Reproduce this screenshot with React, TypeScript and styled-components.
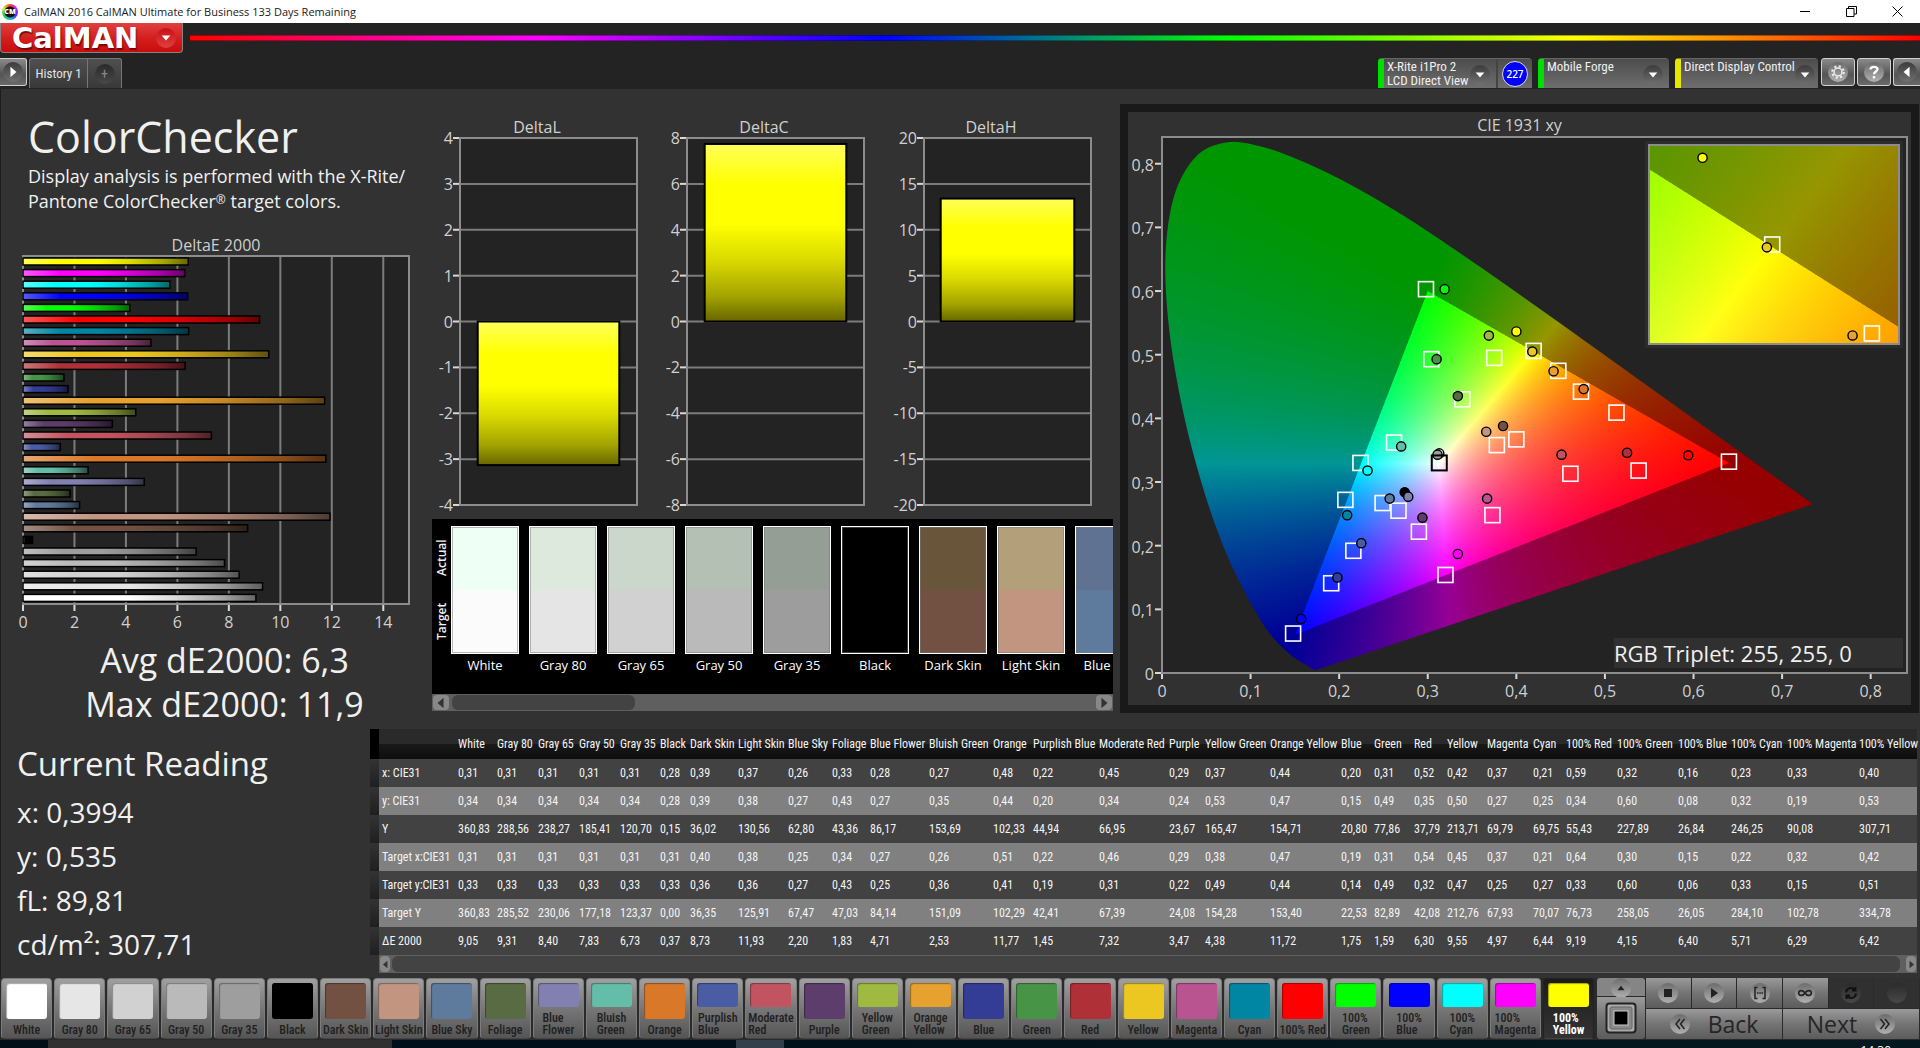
import React, { useEffect, useRef } from 'react';
import styled, { createGlobalStyle, css } from 'styled-components';

/* ---------- data ---------- */

type Patch = { name: string; color: string; values: string[]; col: number };

const patch = (name: string, color: string, col: number, values: string): Patch => ({
  name,
  color,
  col,
  values: values.split(' '),
});

const PATCHES: Patch[] = [
  patch('White', '#ffffff', 39, '0,31 0,34 360,83 0,31 0,33 360,83 9,05'),
  patch('Gray 80', '#e6e6e6', 41, '0,31 0,34 288,56 0,31 0,33 285,52 9,31'),
  patch('Gray 65', '#d1d1d1', 41, '0,31 0,34 238,27 0,31 0,33 230,06 8,40'),
  patch('Gray 50', '#bababa', 41, '0,31 0,34 185,41 0,31 0,33 177,18 7,83'),
  patch('Gray 35', '#9e9e9e', 40, '0,31 0,34 120,70 0,31 0,33 123,37 6,73'),
  patch('Black', '#000000', 30, '0,28 0,28 0,15 0,31 0,33 0,00 0,37'),
  patch('Dark Skin', '#735142', 48, '0,39 0,39 36,02 0,40 0,36 36,35 8,73'),
  patch('Light Skin', '#c29581', 50, '0,37 0,38 130,56 0,38 0,36 125,91 11,93'),
  patch('Blue Sky', '#5e7a9c', 44, '0,26 0,27 62,80 0,25 0,27 67,47 2,20'),
  patch('Foliage', '#596b42', 38, '0,33 0,43 43,36 0,34 0,43 47,03 1,83'),
  patch('Blue Flower', '#8280b0', 59, '0,28 0,27 86,17 0,27 0,25 84,14 4,71'),
  patch('Bluish Green', '#63bda8', 64, '0,27 0,35 153,69 0,26 0,36 151,09 2,53'),
  patch('Orange', '#d97829', 40, '0,48 0,44 102,33 0,51 0,41 102,29 11,77'),
  patch('Purplish Blue', '#4a5ca3', 66, '0,22 0,20 44,94 0,22 0,19 42,41 1,45'),
  patch('Moderate Red', '#c25461', 70, '0,45 0,34 66,95 0,46 0,31 67,39 7,32'),
  patch('Purple', '#5c3d6b', 36, '0,29 0,24 23,67 0,29 0,22 24,08 3,47'),
  patch('Yellow Green', '#9eba40', 65, '0,37 0,53 165,47 0,38 0,49 154,28 4,38'),
  patch('Orange Yellow', '#e6a12e', 71, '0,44 0,47 154,71 0,47 0,44 153,40 11,72'),
  patch('Blue', '#333d96', 33, '0,20 0,15 20,80 0,19 0,14 22,53 1,75'),
  patch('Green', '#479447', 40, '0,31 0,49 77,86 0,31 0,49 82,89 1,59'),
  patch('Red', '#b03038', 33, '0,52 0,35 37,79 0,54 0,32 42,08 6,30'),
  patch('Yellow', '#edc721', 40, '0,42 0,50 213,71 0,45 0,47 212,76 9,55'),
  patch('Magenta', '#ba5491', 46, '0,37 0,27 69,79 0,37 0,25 67,93 4,97'),
  patch('Cyan', '#0085a3', 33, '0,21 0,25 69,75 0,21 0,27 70,07 6,44'),
  patch('100% Red', '#ff0000', 51, '0,59 0,34 55,43 0,64 0,33 76,73 9,19'),
  patch('100% Green', '#00ff00', 61, '0,32 0,60 227,89 0,30 0,60 258,05 4,15'),
  patch('100% Blue', '#0000ff', 53, '0,16 0,08 26,84 0,15 0,06 26,05 6,40'),
  patch('100% Cyan', '#00ffff', 56, '0,23 0,32 246,25 0,22 0,33 284,10 5,71'),
  patch('100% Magenta', '#ff00ff', 72, '0,33 0,19 90,08 0,32 0,15 102,78 6,29'),
  patch('100% Yellow', '#ffff00', 61, '0,40 0,53 307,71 0,42 0,51 334,78 6,42'),
];

const ROW_LABELS = ['x: CIE31', 'y: CIE31', 'Y', 'Target x:CIE31', 'Target y:CIE31', 'Target Y', 'ΔE 2000'];

const STACKED = ['Blue Flower', 'Bluish Green', 'Purplish Blue', 'Moderate Red', 'Yellow Green', 'Orange Yellow',
  '100% Green', '100% Blue', '100% Cyan', '100% Magenta', '100% Yellow'];

const COMPARED = [
  { name: 'White', actual: '#eefff5', target: '#fbfbfb' },
  { name: 'Gray 80', actual: '#dde9dc', target: '#e5e5e5' },
  { name: 'Gray 65', actual: '#ccd7cb', target: '#d1d1d1' },
  { name: 'Gray 50', actual: '#b5c0b4', target: '#bababa' },
  { name: 'Gray 35', actual: '#949e94', target: '#9d9d9d' },
  { name: 'Black', actual: '#000000', target: '#000000' },
  { name: 'Dark Skin', actual: '#69563a', target: '#735142' },
  { name: 'Light Skin', actual: '#b39f7a', target: '#c29581' },
  { name: 'Blue Sky', actual: '#607292', target: '#5e7a9c' },
];

type Point = [number, number];

const TARGETS: Point[] = [
  [0.298, 0.603], [0.304, 0.493], [0.375, 0.495], [0.339, 0.43], [0.262, 0.362], [0.224, 0.33],
  [0.378, 0.358], [0.4, 0.367], [0.207, 0.272], [0.249, 0.267], [0.267, 0.255], [0.29, 0.222],
  [0.373, 0.248], [0.216, 0.192], [0.191, 0.141], [0.32, 0.154], [0.148, 0.062], [0.4195, 0.506],
  [0.4474, 0.4747], [0.473, 0.442], [0.513, 0.409], [0.461, 0.313], [0.538, 0.318], [0.64, 0.332],
];

const READINGS: [number, number, string][] = [
  [0.319, 0.603, '#00ff00'], [0.31, 0.493, '#479447'], [0.334, 0.435, '#596b42'], [0.369, 0.53, '#9eba40'],
  [0.4, 0.5365, '#ffff00'], [0.366, 0.379, '#c29581'], [0.385, 0.388, '#735142'], [0.27, 0.356, '#63bda8'],
  [0.232, 0.318, '#00ffff'], [0.313, 0.345, '#e6e6e6'], [0.311, 0.343, '#9e9e9e'], [0.274, 0.284, '#000000'],
  [0.278, 0.277, '#8280b0'], [0.257, 0.274, '#5e7a9c'], [0.294, 0.244, '#5c3d6b'], [0.367, 0.274, '#ba5491'],
  [0.209, 0.248, '#0085a3'], [0.225, 0.204, '#4a5ca3'], [0.198, 0.15, '#333d96'], [0.157, 0.085, '#0000ff'],
  [0.334, 0.187, '#ff00ff'], [0.418, 0.505, '#edc721'], [0.442, 0.474, '#e6a12e'], [0.476, 0.446, '#d97829'],
  [0.451, 0.343, '#c25461'], [0.525, 0.346, '#b03038'], [0.594, 0.342, '#ff0000'],
];

const LOCUS: Point[] = [
  [0.1741, 0.005], [0.1714, 0.0051], [0.1644, 0.0109], [0.1566, 0.0177], [0.144, 0.0297], [0.1241, 0.0578],
  [0.1096, 0.0868], [0.0913, 0.1327], [0.0687, 0.2007], [0.0454, 0.295], [0.0235, 0.4127], [0.0082, 0.5384],
  [0.0039, 0.6548], [0.0139, 0.7502], [0.0389, 0.812], [0.0743, 0.8338], [0.1142, 0.8262], [0.1547, 0.8059],
  [0.1929, 0.7816], [0.2296, 0.7543], [0.2658, 0.7243], [0.3016, 0.6923], [0.3731, 0.6245], [0.4441, 0.5547],
  [0.5125, 0.4866], [0.5752, 0.4242], [0.627, 0.3725], [0.6658, 0.334], [0.6915, 0.3083], [0.719, 0.2809],
  [0.7347, 0.2653],
];

const range = (from: number, to: number, step: number) =>
  Array.from({ length: Math.round((to - from) / step) + 1 }, (_, i) => from + i * step);

/* ---------- page shell ---------- */

const GlobalStyle = createGlobalStyle`
  * { box-sizing: border-box; }
  body { margin: 0; background: #232323; font-family: 'Open Sans', 'Noto Sans', sans-serif; color: #f0f0f0; }
  button { font: inherit; color: inherit; margin: 0; padding: 0; border: 0; background: none; }
  h1, h2, p, figure { margin: 0; font-weight: 400; }
`;

const narrow = "'Roboto Condensed', 'Open Sans', sans-serif";

const Page = styled.div`
  display: flex;
  flex-direction: column;
  height: 100vh;
  overflow: hidden;
`;

const TitleBar = styled.header`
  display: flex;
  align-items: center;
  height: 23px;
  padding-left: 2px;
  background: #fff;
  color: #1a1a1a;
  font-size: 11px;
`;

const AppIcon = styled.span`
  display: grid;
  place-items: center;
  width: 16px;
  height: 16px;
  margin-right: 6px;
  border-radius: 50%;
  background: radial-gradient(circle, #111 0 5px, transparent 6px),
    conic-gradient(#ff3f2f, #c020ff, #5030ff, #10c0e0, #20d040, #e0e020, #ff3f2f);
  color: #fff;
  font-size: 7px;
  font-weight: 800;
`;

const AppTitle = styled.span`
  flex: 1;
`;

const WindowButton = styled.button`
  width: 46px;
  height: 20px;
  svg { display: block; margin: auto; }
`;

const BrandRow = styled.div`
  display: flex;
  height: 30px;
  gap: 7px;
`;

const Brand = styled.button`
  display: flex;
  align-items: center;
  justify-content: space-between;
  width: 183px;
  padding: 0 6px 0 11px;
  border: 1px solid #8d8080;
  border-top: 0;
  border-radius: 0 0 4px 4px;
  background: linear-gradient(#e04040, #d42020 50%, #c80c0c);
`;

const BrandName = styled.span`
  font: 700 29px/28px 'DejaVu Sans', sans-serif;
  color: #fff;
  text-shadow: 1px 2px 1px rgba(60, 0, 0, 0.6);
`;

const Spectrum = styled.div`
  flex: 1;
  height: 6px;
  margin-top: 12px;
  border: solid rgba(0, 0, 0, 0.35);
  border-width: 1px 0;
  background: linear-gradient(90deg, #f00, #f0f 20%, #00f 40%, #0f0 60%, #ff0 80%, #f00);
  background-origin: border-box;
`;

const Round = styled.span<{ $tone?: 'red' | 'dark' | 'light' | 'off' }>`
  display: grid;
  place-items: center;
  width: 20px;
  height: 20px;
  border-radius: 50%;
  background: ${({ $tone }) =>
    $tone === 'red' ? 'linear-gradient(#c81018, #e04040)'
    : $tone === 'light' ? 'linear-gradient(#6c6c6c, #b0b0b0)'
    : $tone === 'off' ? 'linear-gradient(#2a2a2a, #484848)'
    : 'linear-gradient(#3c3c3c, #707070)'};
`;

const Toolbar = styled.nav`
  display: flex;
  align-items: flex-end;
  height: 36px;
  padding-bottom: 1px;
  font-family: ${narrow};
`;

const square = css`
  display: grid;
  place-items: center;
  height: 28px;
  margin-bottom: 2px;
  border: 1px solid #d0d0d0;
  border-radius: 3px;
  background: linear-gradient(#8a8a8a, #555 60%, #6a6a6a);
`;

const EdgeButton = styled.button<{ $side: 'left' | 'right' }>`
  ${square}
  width: 27px;
  ${({ $side }) => ($side === 'left'
    ? 'border-left: 0; border-radius: 0 3px 3px 0; margin-right: 2px;'
    : 'border-right: 0; border-radius: 3px 0 0 3px;')}
`;

const SquareButton = styled.button`
  ${square}
  width: 34px;
  margin-right: 2px;
`;

const Tabs = styled.div`
  display: flex;
  height: 30px;
  margin-right: auto;
  border: 1px solid #777;
  border-bottom: 0;
  border-radius: 3px 3px 0 0;
  background: linear-gradient(#505050, #383838);
`;

const Tab = styled.button`
  width: 58px;
  border-right: 1px solid #777;
  font-size: 13px;
  color: #e4e4e4;
`;

const AddTab = styled.button`
  display: grid;
  place-items: center;
  width: 33px;
  color: #8a8a8a;
  font-size: 14px;
`;

const Devices = styled.div`
  display: flex;
  gap: 6px;
  margin-right: 3px;
`;

const Device = styled.div<{ $lamp: string; $width: number }>`
  display: flex;
  width: ${({ $width }) => $width}px;
  height: 30px;
  border-top: 1px solid #666;
  border-left: 6px solid ${({ $lamp }) => $lamp};
  border-radius: 4px 4px 0 0;
  background: linear-gradient(#4c4c4c, #6e6e6e);
`;

const DeviceMenu = styled.button`
  display: flex;
  flex: 1;
  justify-content: space-between;
  padding: 1px 6px 0 3px;
  font-size: 13px;
  line-height: 14px;
  text-align: left;
  white-space: pre;
  ${Round} { margin-top: 5px; }
`;

const MeterCount = styled.div`
  display: grid;
  place-items: center;
  width: 36px;
  border-left: 2px solid #444;
`;

const MeterBadge = styled.span`
  display: grid;
  place-items: center;
  width: 26px;
  height: 26px;
  border: 1px solid #ddd;
  border-radius: 50%;
  background: #0000ff;
  font: 600 10px/1 'Open Sans', sans-serif;
  color: #fff;
`;

const Workspace = styled.main`
  display: flex;
  flex: 1;
  flex-direction: column;
  min-height: 0;
  border-left: 1px solid #1d1d1d;
  background: #323232;
`;

const Upper = styled.div`
  display: grid;
  flex: 1;
  grid-template-columns: 431px minmax(0, 681fr) minmax(0, 806fr);
  min-height: 0;
  padding-right: 1px;
`;

const Lower = styled.div`
  display: grid;
  grid-template-columns: 369px minmax(0, 1fr);
  padding: 0 3px 5px 0;
`;

/* ---------- left column ---------- */

const Summary = styled.section`
  display: flex;
  flex-direction: column;
  padding: 22px 0 3px;
`;

const Heading = styled.h1`
  padding-left: 27px;
  font-size: 43px;
  line-height: 52px;
`;

const Intro = styled.p`
  margin: 1px 0 21px;
  padding-left: 27px;
  font-size: 18px;
  line-height: 25px;
  small { font-size: 12px; vertical-align: 4px; line-height: 12px; }
`;

const ChartTitle = styled.h2`
  font-size: 16px;
  line-height: 20px;
  text-align: center;
  color: #d0d0d0;
`;

const DeltaEFrame = styled.div`
  display: flex;
  flex: 1;
  flex-direction: column;
  min-height: 0;
  padding: 0 23px 34px 22px;
`;

const Plot = styled.svg`
  display: block;
  flex: 1;
  width: 100%;
  min-height: 0;
  margin-top: 1px;
  overflow: visible;
  font-size: 16px;
  fill: #d0d0d0;
`;

const Totals = styled.div`
  padding-left: 16px;
  font-size: 34px;
  line-height: 44px;
  text-align: center;
`;

/* ---------- middle column ---------- */

const Middle = styled.section`
  display: flex;
  flex-direction: column;
  gap: 14px;
  min-width: 0;
  padding: 28px 0 18px;
`;

const DeltaCharts = styled.div`
  display: grid;
  flex: 1;
  grid-template-columns: repeat(3, minmax(0, 1fr));
  gap: 27px;
  min-height: 0;
  padding: 0 22px 0 5px;
`;

const DeltaChartFrame = styled.div`
  display: flex;
  flex-direction: column;
`;

const AxisSpace = styled.div<{ $left: number }>`
  display: flex;
  flex: 1;
  min-height: 0;
  padding-left: ${({ $left }) => $left}px;
`;

const ComparePanel = styled.div`
  background: #000;
`;

const CompareBody = styled.div`
  display: flex;
  height: 175px;
  padding-top: 7px;
  overflow: hidden;
`;

const Sides = styled.div`
  display: flex;
  flex: 0 0 19px;
  justify-content: space-around;
  height: 128px;
  font-size: 12px;
  font-weight: 600;
  line-height: 19px;
  writing-mode: vertical-rl;
  transform: rotate(180deg);
`;

const Compare = styled.figure`
  flex: 0 0 78px;
  figcaption {
    width: 68px;
    font-size: 13px;
    line-height: 23px;
    text-align: center;
    color: #fff;
    white-space: nowrap;
  }
`;

const CompareSwatch = styled.div<{ $actual: string; $target: string }>`
  width: 68px;
  height: 128px;
  border: 1px solid #fff;
  box-shadow: inset 0 0 0 1px rgba(120, 120, 120, 0.5);
  background: linear-gradient(${({ $actual, $target }) => `${$actual} 50%, ${$target} 50%`});
`;

const ScrollTrack = styled.div<{ $slim?: boolean }>`
  display: flex;
  gap: ${({ $slim }) => ($slim ? 2 : 3)}px;
  height: ${({ $slim }) => ($slim ? 18 : 17)}px;
  padding: 1px;
  background: #5f5f5f;
`;

const ScrollArrow = styled.button<{ $slim?: boolean }>`
  display: grid;
  place-items: center;
  width: ${({ $slim }) => ($slim ? 10 : 16)}px;
  border-radius: 4px;
  background: #888;
  &:last-child { margin-left: auto; }
`;

const ScrollThumb = styled.div<{ $full?: boolean }>`
  ${({ $full }) => ($full ? 'flex: 1; margin-right: 4px;' : 'width: 27%;')}
  border-radius: 6px;
  background: #434343;
`;

/* ---------- CIE panel ---------- */

const CiePanel = styled.section`
  display: flex;
  flex-direction: column;
  min-width: 0;
  margin: 15px 0 16px 7px;
  padding-top: 3px;
  border: 8px solid #191919;
  background: #313131;
`;

const CieFrame = styled.div`
  position: relative;
  flex: 1;
  min-height: 0;
  margin: 2px 4px 32px 34px;
  background: #232323;
`;

const GamutCanvas = styled.canvas`
  position: absolute;
  inset: 0;
  width: 100%;
  height: 100%;
`;

const Overlay = styled.svg`
  position: absolute;
  inset: 0;
  width: 100%;
  height: 100%;
  overflow: visible;
  font-size: 16px;
  fill: #d0d0d0;
`;

const Inset = styled.div`
  position: absolute;
  top: 4px;
  right: 4px;
  width: 258px;
  height: 207px;
  padding: 4px;
  background: #2c2c2c;
`;

const InsetView = styled.div`
  position: relative;
  height: 100%;
`;

const Triplet = styled.p`
  position: absolute;
  right: 4px;
  bottom: 5px;
  width: 289px;
  background: #303030;
  font-size: 22px;
  line-height: 30px;
`;

/* ---------- lower band ---------- */

const Reading = styled.section`
  padding: 13px 0 0 16px;
`;

const ReadingTitle = styled.h2`
  margin-bottom: 4px;
  font-size: 33px;
  line-height: 44px;
`;

const ReadingLine = styled.p`
  font-size: 28px;
  line-height: 44px;
`;

const DataTable = styled.table`
  width: 100%;
  border-collapse: collapse;
  table-layout: fixed;
  font: 12px/28px ${narrow};
  color: #f4f4f4;
  th, td { padding: 0 0 0 3px; font-weight: 400; text-align: left; white-space: nowrap; }
  thead tr { background: linear-gradient(#2a2a2a 50%, #191919 50%, #0d0d0d); line-height: 30px; }
  tbody tr { background: #424242; }
  tbody tr:nth-child(even) { background: #808080; }
  tr > :first-child { background: linear-gradient(#333, #1f1f1f); }
  thead tr > :first-child { background: #000; }
`;

const TableScroll = styled.div`
  margin-left: 9px;
`;

/* ---------- bottom bar ---------- */

const BottomBar = styled.footer`
  display: flex;
  height: 62px;
  padding: 0 1px 1px;
  gap: 3px;
  background: #2a2a2a;
`;

const Patches = styled.div`
  display: flex;
  flex: 1;
  gap: 2px;
  min-width: 0;
`;

const PatchButton = styled.button<{ $active?: boolean }>`
  display: flex;
  flex: 1 1 0;
  flex-direction: column;
  align-items: center;
  justify-content: space-between;
  min-width: 0;
  padding: 4px 0 2px;
  border: 1px solid ${({ $active }) => ($active ? '#222' : '#7c7c7c')};
  border-bottom-color: #444;
  border-radius: 4px;
  background: ${({ $active }) => ($active ? 'linear-gradient(#1c1c1c, #333)' : 'linear-gradient(#a0a0a0, #777 50%, #555)')};
  color: ${({ $active }) => ($active ? '#fff' : '#202020')};
  font: ${({ $active }) => ($active ? 700 : 500)} 12px/12px ${narrow};
`;

const PatchColor = styled.span<{ $color: string; $short: boolean }>`
  width: 41px;
  height: ${({ $short }) => ($short ? 24 : 36)}px;
  border-radius: 3px;
  background: ${({ $color }) => $color};
  box-shadow: inset 1px 1px 1px rgba(0, 0, 0, 0.35);
`;

const PatchLabel = styled.span<{ $short: boolean }>`
  width: ${({ $short }) => ($short ? 'min-content' : 'auto')};
  text-align: left;
  white-space: ${({ $short }) => ($short ? 'normal' : 'nowrap')};
`;

const WindowPattern = styled.div`
  display: flex;
  flex-direction: column;
  gap: 1px;
  width: 48px;
`;

const steel = 'linear-gradient(#9a9a9a, #747474 50%, #5c5c5c)';

const PatternUp = styled.button`
  display: grid;
  place-items: center;
  height: 18px;
  border-radius: 3px 3px 0 0;
  background: #858585;
`;

const PatternPick = styled.button`
  display: grid;
  flex: 1;
  place-items: center;
  border-radius: 0 0 3px 3px;
  background: ${steel};
`;

const Transport = styled.div`
  display: grid;
  grid-template-columns: repeat(6, 1fr);
  grid-template-rows: 30px 30px;
  gap: 1px;
  width: 273px;
  margin-left: -2px;
`;

const TransportButton = styled.button<{ $off?: boolean }>`
  display: grid;
  place-items: center;
  background: ${({ $off }) => ($off ? '#303030' : steel)};
`;

const StepButton = styled.button`
  display: flex;
  grid-column: span 3;
  align-items: center;
  justify-content: center;
  gap: 18px;
  background: ${steel};
  color: #252525;
  font-size: 23px;
  line-height: 28px;
`;

const Taskbar = styled.div`
  display: flex;
  justify-content: flex-end;
  height: 8px;
  padding: 5px 29px 0 0;
  overflow: hidden;
  background: linear-gradient(90deg, #020e18 48px, #303030 48px 392px, #010f1a 392px 736px, #33404c 736px 784px, #02121a 784px, #04181f);
  font: 12px/12px 'Open Sans', sans-serif;
  color: #fff;
`;

/* ---------- drawing helpers ---------- */

const Glyph = ({ d, fill = 'none', stroke = 'none', size = 14, w = 1.5 }: {
  d: string; fill?: string; stroke?: string; size?: number; w?: number;
}) => (
  <svg width={size} height={size} viewBox="0 0 14 14" fill={fill} stroke={stroke} strokeWidth={w} aria-hidden="true">
    <path d={d} />
  </svg>
);

const DOWN = 'M2 4h10l-5 6z';
const LEFT = 'M10 1v12L3 7z';
const RIGHT = 'M4 1v12l7-6z';

const mix = (hex: string, other: number, amount: number) => {
  const n = parseInt(hex.slice(1), 16);
  const c = [n >> 16, (n >> 8) & 255, n & 255].map((v) => Math.round(v + (other - v) * amount));
  return `rgb(${c.join(',')})`;
};

const Shade = ({ id, color, vertical }: { id: string; color: string; vertical?: boolean }) => (
  <linearGradient id={id} x2={vertical ? 0 : 1} y2={vertical ? 1 : 0}>
    <stop offset="0" stopColor={mix(color, 255, 0.35)} />
    <stop offset="0.23" stopColor={color} />
    <stop offset="0.45" stopColor={color} />
    <stop offset="0.65" stopColor={mix(color, 0, 0.14)} />
    <stop offset="0.86" stopColor={mix(color, 0, 0.36)} />
    <stop offset="1" stopColor={mix(color, 0, 0.6)} />
  </linearGradient>
);

const pct = (v: number) => `${v * 100}%`;

function DeltaEChart() {
  const bars = [...PATCHES].reverse();
  const slot = 1 / bars.length;
  return (
    <DeltaEFrame>
      <ChartTitle>DeltaE 2000</ChartTitle>
      <Plot height="0" role="img" aria-label="DeltaE 2000">
        <defs>
          {bars.map((b, i) => <Shade key={b.name} id={`de${i}`} color={b.color} />)}
        </defs>
        <rect width="100%" height="100%" fill="#232323" />
        {range(0, 14, 2).map((t) => (
          <g key={t}>
            <line x1={pct(t / 15)} x2={pct(t / 15)} y2="100%" stroke="#7c7c7c" strokeWidth="2" />
            <svg x={pct(t / 15)} y="100%" overflow="visible">
              <line y1="1" y2="7" stroke="#d8d8d8" strokeWidth="2" />
              <text y="24" textAnchor="middle">{t}</text>
            </svg>
          </g>
        ))}
        <rect width="100%" height="100%" fill="none" stroke="#8c8c8c" strokeWidth="2" />
        {bars.map((b, i) => (
          <svg key={b.name} y={pct(i * slot)} overflow="visible">
            <rect x="0" y="2" width={pct(parseFloat(b.values[6].replace(',', '.')) / 15)} height="7"
              fill={`url(#de${i})`} stroke="#000" strokeWidth="1.5" />
          </svg>
        ))}
      </Plot>
    </DeltaEFrame>
  );
}

function DeltaChart({ title, max, step, value, left }: {
  title: string; max: number; step: number; value: number; left: number;
}) {
  const y = (v: number) => pct((max - v) / (2 * max));
  return (
    <DeltaChartFrame>
      <ChartTitle>{title}</ChartTitle>
      <AxisSpace $left={left}>
        <Plot role="img" aria-label={title}>
          <defs><Shade id={title} color="#ffff00" vertical /></defs>
          <rect width="100%" height="100%" fill="#232323" />
          {range(-max, max, step).map((t) => (
            <g key={t}>
              <line x2="100%" y1={y(t)} y2={y(t)} stroke="#7c7c7c" strokeWidth="2" />
              <svg y={y(t)} overflow="visible">
                <line x1="-7" x2="-1" stroke="#d8d8d8" strokeWidth="2" />
                <text x="-7" y="6" textAnchor="end">{t}</text>
              </svg>
            </g>
          ))}
          <rect width="100%" height="100%" fill="none" stroke="#8c8c8c" strokeWidth="2" />
          <rect x="10%" width="80%" y={y(Math.max(0, value))} height={pct(Math.abs(value) / (2 * max))}
            fill={`url(#${title})`} stroke="#000" strokeWidth="2" />
        </Plot>
      </AxisSpace>
    </DeltaChartFrame>
  );
}

type View = { x0: number; x1: number; y0: number; y1: number };

const FULL: View = { x0: 0, x1: 0.841, y0: 0, y1: 0.842 };
const CLOSE: View = { x0: 0.385, x1: 0.455, y0: 0.471, y1: 0.541 };

function insideRec709(x: number, y: number) {
  const side = (ax: number, ay: number, bx: number, by: number) => (bx - ax) * (y - ay) - (by - ay) * (x - ax);
  return side(0.64, 0.33, 0.3, 0.6) >= 0 && side(0.3, 0.6, 0.15, 0.06) >= 0 && side(0.15, 0.06, 0.64, 0.33) >= 0;
}

function paintGamut(canvas: HTMLCanvasElement, view: View) {
  const w = (canvas.width = canvas.clientWidth * 2);
  const h = (canvas.height = canvas.clientHeight * 2);
  const layer = document.createElement('canvas');
  layer.width = w;
  layer.height = h;
  const layerCtx = layer.getContext('2d')!;
  const image = layerCtx.createImageData(w, h);
  for (let j = 0; j < h; j += 1) {
    const y = view.y1 - ((j + 0.5) / h) * (view.y1 - view.y0);
    for (let i = 0; i < w; i += 1) {
      const x = view.x0 + ((i + 0.5) / w) * (view.x1 - view.x0);
      const z = 1 - x - y;
      const r = Math.max(0, 3.2406 * x - 1.5372 * y - 0.4986 * z);
      const g = Math.max(0, -0.9689 * x + 1.8758 * y + 0.0415 * z);
      const b = Math.max(0, 0.0557 * x - 0.204 * y + 1.057 * z);
      const k = (insideRec709(x, y) ? 255 : 150) / Math.max(r, g, b, 1e-6);
      const o = (j * w + i) * 4;
      image.data[o] = r * k;
      image.data[o + 1] = g * k;
      image.data[o + 2] = b * k;
      image.data[o + 3] = 255;
    }
  }
  layerCtx.putImageData(image, 0, 0);

  const ctx = canvas.getContext('2d')!;
  const px = (p: Point): Point => [
    ((p[0] - view.x0) / (view.x1 - view.x0)) * w,
    ((view.y1 - p[1]) / (view.y1 - view.y0)) * h,
  ];
  const pts = LOCUS.map(px);
  ctx.beginPath();
  ctx.moveTo(...pts[0]);
  for (let i = 0; i < pts.length - 1; i += 1) {
    const a = pts[Math.max(0, i - 1)];
    const b = pts[i];
    const c = pts[i + 1];
    const d = pts[Math.min(pts.length - 1, i + 2)];
    ctx.bezierCurveTo(b[0] + (c[0] - a[0]) / 6, b[1] + (c[1] - a[1]) / 6,
      c[0] - (d[0] - b[0]) / 6, c[1] - (d[1] - b[1]) / 6, c[0], c[1]);
  }
  ctx.closePath();
  ctx.clip();
  ctx.drawImage(layer, 0, 0);
}

function Gamut({ view }: { view: View }) {
  const ref = useRef<HTMLCanvasElement>(null);
  useEffect(() => {
    const paint = () => ref.current && paintGamut(ref.current, view);
    paint();
    window.addEventListener('resize', paint);
    return () => window.removeEventListener('resize', paint);
  }, [view]);
  return <GamutCanvas ref={ref} />;
}

function Markers({ view }: { view: View }) {
  const X = (x: number) => pct((x - view.x0) / (view.x1 - view.x0));
  const Y = (y: number) => pct((view.y1 - y) / (view.y1 - view.y0));
  const shown = ([x, y]: readonly [number, number, ...unknown[]]) =>
    x > view.x0 && x < view.x1 && y > view.y0 && y < view.y1;
  return (
    <>
      {TARGETS.filter(shown).map(([x, y]) => (
        <svg key={`${x}-${y}`} x={X(x)} y={Y(y)} overflow="visible">
          <rect x="-7.5" y="-7.5" width="15" height="15" fill="none" stroke="#fff" strokeWidth="1.6" />
        </svg>
      ))}
      {READINGS.filter(shown).map(([x, y, color]) => (
        <svg key={`${x}-${y}`} x={X(x)} y={Y(y)} overflow="visible">
          <circle r="4.6" fill={color} stroke="#000" strokeWidth="1.4" />
        </svg>
      ))}
      {view === FULL && (
        <svg x={X(0.313)} y={Y(0.33)} overflow="visible">
          <rect x="-7.5" y="-7.5" width="15" height="15" fill="none" stroke="#000" strokeWidth="2" />
        </svg>
      )}
    </>
  );
}

const axisLabel = (i: number) => (i === 0 ? '0' : `0,${i}`);

function CieChart() {
  return (
    <CiePanel>
      <ChartTitle>CIE 1931 xy</ChartTitle>
      <CieFrame>
        <Gamut view={FULL} />
        <Overlay role="img" aria-label="CIE 1931 xy">
          {range(0, 8, 1).map((i) => (
            <g key={i}>
              <svg x={pct(i / 10 / FULL.x1)} y="100%" overflow="visible">
                <line y1="1" y2="6" stroke="#d8d8d8" strokeWidth="2" />
                <text y="24" textAnchor="middle">{axisLabel(i)}</text>
              </svg>
              <svg y={pct(1 - i / 10 / FULL.y1)} overflow="visible">
                <line x1="-7" x2="-1" stroke="#d8d8d8" strokeWidth="2" />
                <text x="-8" y="7" textAnchor="end">{axisLabel(i)}</text>
              </svg>
            </g>
          ))}
          <rect width="100%" height="100%" fill="none" stroke="#8c8c8c" strokeWidth="2" />
          <Markers view={FULL} />
        </Overlay>
        <Inset>
          <InsetView>
            <Gamut view={CLOSE} />
            <Overlay>
              <rect width="100%" height="100%" fill="none" stroke="#8c8c8c" strokeWidth="2" />
              <Markers view={CLOSE} />
            </Overlay>
          </InsetView>
        </Inset>
        <Triplet>RGB Triplet: 255, 255, 0</Triplet>
      </CieFrame>
    </CiePanel>
  );
}

function ComparisonPanel() {
  return (
    <ComparePanel>
      <CompareBody>
        <Sides><span>Target</span><span>Actual</span></Sides>
        {COMPARED.map((c) => (
          <Compare key={c.name}>
            <CompareSwatch $actual={c.actual} $target={c.target} />
            <figcaption>{c.name}</figcaption>
          </Compare>
        ))}
      </CompareBody>
      <ScrollTrack>
        <ScrollArrow aria-label="Scroll left"><Glyph d={LEFT} fill="#333" size={12} /></ScrollArrow>
        <ScrollThumb />
        <ScrollArrow aria-label="Scroll right"><Glyph d={RIGHT} fill="#333" size={12} /></ScrollArrow>
      </ScrollTrack>
    </ComparePanel>
  );
}

function ReadingsTable() {
  return (
    <div>
      <DataTable>
        <colgroup>
          <col width="9" />
          <col width="76" />
          {PATCHES.map((p) => <col key={p.name} width={p.col} />)}
        </colgroup>
        <thead>
          <tr>
            <td />
            <td />
            {PATCHES.map((p) => <th key={p.name} scope="col">{p.name}</th>)}
          </tr>
        </thead>
        <tbody>
          {ROW_LABELS.map((label, row) => (
            <tr key={label}>
              <td />
              <th scope="row">{label}</th>
              {PATCHES.map((p) => <td key={p.name}>{p.values[row]}</td>)}
            </tr>
          ))}
        </tbody>
      </DataTable>
      <TableScroll>
        <ScrollTrack $slim>
          <ScrollArrow $slim aria-label="Scroll table left"><Glyph d={LEFT} fill="#333" size={9} /></ScrollArrow>
          <ScrollThumb $full />
          <ScrollArrow $slim aria-label="Scroll table right"><Glyph d={RIGHT} fill="#333" size={9} /></ScrollArrow>
        </ScrollTrack>
      </TableScroll>
    </div>
  );
}

const INK = '#222';

const TRANSPORT = [
  { label: 'Stop', icon: <Glyph d="M3 3h8v8H3z" fill={INK} /> },
  { label: 'Play', icon: <Glyph d="M4 2v10l7-5z" fill={INK} /> },
  { label: 'Read series', icon: <Glyph d="M4.500 1.500h-2.500v11h2.500M9.500 1.500h2.500v11h-2.500M4 7h1.500M6.300 7h1.500M8.500 7H10" stroke={INK} /> },
  { label: 'Read continuously', icon: <Glyph size={16} d="M7 7C5.500 4.500 1.500 4 1.500 7s4 2.500 5.500 0 5.500-3 5.500 0S8.500 9.500 7 7z" stroke={INK} /> },
];

function Footer() {
  return (
    <BottomBar>
      <Patches>
        {PATCHES.map((p) => {
          const short = STACKED.includes(p.name);
          return (
            <PatchButton key={p.name} $active={p.name === '100% Yellow'}>
              <PatchColor $color={p.color} $short={short} />
              <PatchLabel $short={short}>{p.name}</PatchLabel>
            </PatchButton>
          );
        })}
      </Patches>
      <WindowPattern>
        <PatternUp aria-label="More patterns">
          <Round $tone="light"><Glyph d="M2 10h10L7 4z" fill={INK} size={10} /></Round>
        </PatternUp>
        <PatternPick aria-label="Pattern window">
          <svg width="32" height="34" viewBox="0 0 32 34" aria-hidden="true">
            <rect x="1.500" y="2.500" width="29" height="29" rx="3" fill="#aaa" stroke="#222" strokeWidth="2" />
            <rect x="5" y="6" width="22" height="22" rx="2" fill="#8a8a8a" stroke="#666" />
            <rect x="9" y="10" width="14" height="14" fill="#000" stroke="#ccc" />
          </svg>
        </PatternPick>
      </WindowPattern>
      <Transport>
        {TRANSPORT.map((t) => (
          <TransportButton key={t.label} aria-label={t.label}><Round $tone="light">{t.icon}</Round></TransportButton>
        ))}
        <TransportButton $off aria-label="Refresh">
          <Round $tone="off"><Glyph d="M2 6.500a5 5 0 0 1 9-2.500M12 7.500a5 5 0 0 1-9 2.500M11.500 1v3.500H8M2.500 13V9.500H6" stroke="#111" w={2} /></Round>
        </TransportButton>
        <TransportButton $off aria-label="Record"><Round $tone="off" /></TransportButton>
        <StepButton>
          <Round $tone="light"><Glyph d="M7 2L3 7l4 5M11.500 2l-4 5 4 5" stroke={INK} w={1.5} /></Round>
          Back
        </StepButton>
        <StepButton>
          Next
          <Round $tone="light"><Glyph d="M2.500 2l4 5-4 5M7 2l4 5-4 5" stroke={INK} w={1.5} /></Round>
        </StepButton>
      </Transport>
    </BottomBar>
  );
}

export default function App() {
  return (
    <Page>
      <GlobalStyle />
      <TitleBar>
        <AppIcon>CM</AppIcon>
        <AppTitle>CalMAN 2016 CalMAN Ultimate for Business 133 Days Remaining</AppTitle>
        <WindowButton aria-label="Minimize">
          <svg width="11" height="11" viewBox="0 0 11 11" stroke="#000"><path d="M0 5.500h10" /></svg>
        </WindowButton>
        <WindowButton aria-label="Restore">
          <svg width="11" height="11" viewBox="0 0 11 11" stroke="#000" fill="none"><path d="M.5 2.500h7.500v8H.5zM2.500 2.500v-2h8v7.500H8" /></svg>
        </WindowButton>
        <WindowButton aria-label="Close">
          <svg width="11" height="11" viewBox="0 0 11 11" stroke="#000"><path d="M.5.5l10 10M10.500.5l-10 10" /></svg>
        </WindowButton>
      </TitleBar>

      <BrandRow>
        <Brand aria-haspopup="menu">
          <BrandName>CalMAN</BrandName>
          <Round $tone="red"><Glyph d={DOWN} fill="#fff" size={12} /></Round>
        </Brand>
        <Spectrum />
      </BrandRow>

      <Toolbar>
        <EdgeButton $side="left" aria-label="Expand">
          <Round><Glyph d={RIGHT} fill="#fff" size={12} /></Round>
        </EdgeButton>
        <Tabs>
          <Tab>History 1</Tab>
          <AddTab aria-label="Add tab"><Round $tone="off">+</Round></AddTab>
        </Tabs>
        <Devices>
          <Device $lamp="#00e000" $width={154}>
            <DeviceMenu aria-haspopup="menu">
              {'X-Rite i1Pro 2\nLCD Direct View'}
              <Round><Glyph d={DOWN} fill="#fff" size={12} /></Round>
            </DeviceMenu>
            <MeterCount><MeterBadge>227</MeterBadge></MeterCount>
          </Device>
          <Device $lamp="#00e000" $width={131}>
            <DeviceMenu aria-haspopup="menu">
              Mobile Forge
              <Round><Glyph d={DOWN} fill="#fff" size={12} /></Round>
            </DeviceMenu>
          </Device>
          <Device $lamp="#e6e600" $width={143}>
            <DeviceMenu aria-haspopup="menu">
              Direct Display Control
              <Round><Glyph d={DOWN} fill="#fff" size={12} /></Round>
            </DeviceMenu>
          </Device>
        </Devices>
        <SquareButton aria-label="Settings">
          <Round $tone="light">
            <svg width="16" height="16" viewBox="0 0 16 16" fill="none" stroke="#eee" aria-hidden="true">
              <circle cx="8" cy="8" r="4" strokeWidth="1.500" />
              <circle cx="8" cy="8" r="5.800" strokeWidth="2" strokeDasharray="2.200 2.355" />
            </svg>
          </Round>
        </SquareButton>
        <SquareButton aria-label="Help">
          <Round $tone="light">
            <svg width="14" height="14" viewBox="0 0 14 14" fill="none" stroke="#fff" strokeWidth="2.400" aria-hidden="true">
              <path d="M3.500 4.500C3.500 1 10.500 1 10.500 4.300 10.500 6.500 7 6.500 7 9.300M7 11v2.400" />
            </svg>
          </Round>
        </SquareButton>
        <EdgeButton $side="right" aria-label="Collapse">
          <Round><Glyph d={LEFT} fill="#fff" size={12} /></Round>
        </EdgeButton>
      </Toolbar>

      <Workspace>
        <Upper>
          <Summary>
            <Heading>ColorChecker</Heading>
            <Intro>
              Display analysis is performed with the X-Rite/<br />
              Pantone ColorChecker<small>®</small> target colors.
            </Intro>
            <DeltaEChart />
            <Totals>
              <p>Avg dE2000: 6,3</p>
              <p>Max dE2000: 11,9</p>
            </Totals>
          </Summary>
          <Middle>
            <DeltaCharts>
              <DeltaChart title="DeltaL" max={4} step={1} value={-3.13} left={23} />
              <DeltaChart title="DeltaC" max={8} step={2} value={7.74} left={23} />
              <DeltaChart title="DeltaH" max={20} step={5} value={13.4} left={33} />
            </DeltaCharts>
            <ComparisonPanel />
          </Middle>
          <CieChart />
        </Upper>
        <Lower>
          <Reading>
            <ReadingTitle>Current Reading</ReadingTitle>
            <ReadingLine>x: 0,3994</ReadingLine>
            <ReadingLine>y: 0,535</ReadingLine>
            <ReadingLine>fL: 89,81</ReadingLine>
            <ReadingLine>cd/m²: 307,71</ReadingLine>
          </Reading>
          <ReadingsTable />
        </Lower>
      </Workspace>
      <Footer />
      <Taskbar>14:30</Taskbar>
    </Page>
  );
}
